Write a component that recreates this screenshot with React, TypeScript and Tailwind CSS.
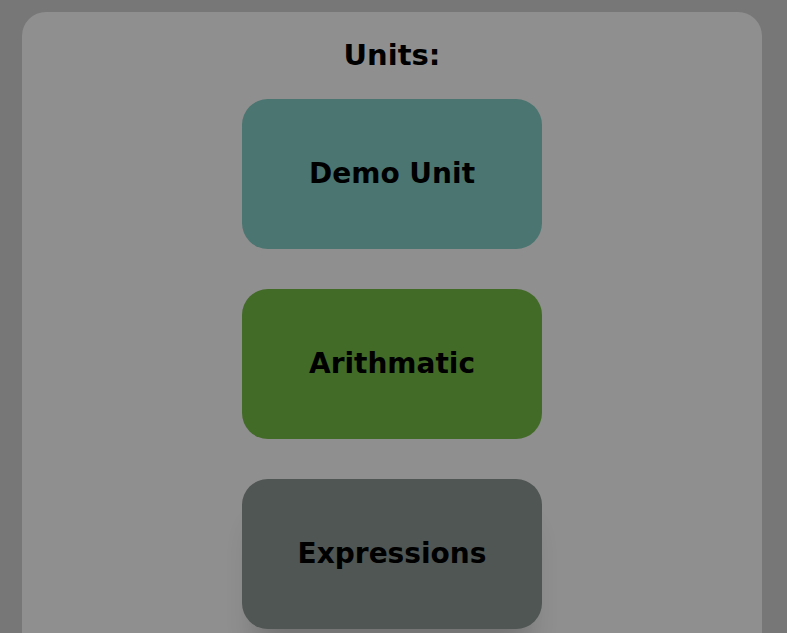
export default function App() {
  const units = [
    { name: 'Demo Unit', color: 'bg-[#4a7570]' },
    { name: 'Arithmatic', color: 'bg-[#436b28]' },
    { name: 'Expressions', color: 'bg-[#4f5654]' },
  ];

  return (
    <div className="h-[633px] overflow-hidden bg-[#777777] pl-[22px] pt-[12px]" style={{ fontFamily: '"DejaVu Sans", sans-serif' }}>
      <div className="flex h-[700px] w-[740px] flex-col items-center rounded-[24px] bg-[#8f8f8f] pt-[23px]">
        <h1 className="text-[29px] font-bold leading-[40px] text-black">Units:</h1>
        <div className="mt-[24px] flex flex-col gap-[40px]">
          {units.map((u, i) => (
            <button
              key={u.name}
              type="button"
              className={`flex h-[150px] w-[300px] items-center justify-center rounded-[26px] text-[28px] font-bold text-black ${u.color} ${i === 2 ? 'shadow-[0_34px_30px_-14px_rgba(0,0,0,0.2)]' : ''}`}
            >
              {u.name}
            </button>
          ))}
        </div>
      </div>
    </div>
  );
}
